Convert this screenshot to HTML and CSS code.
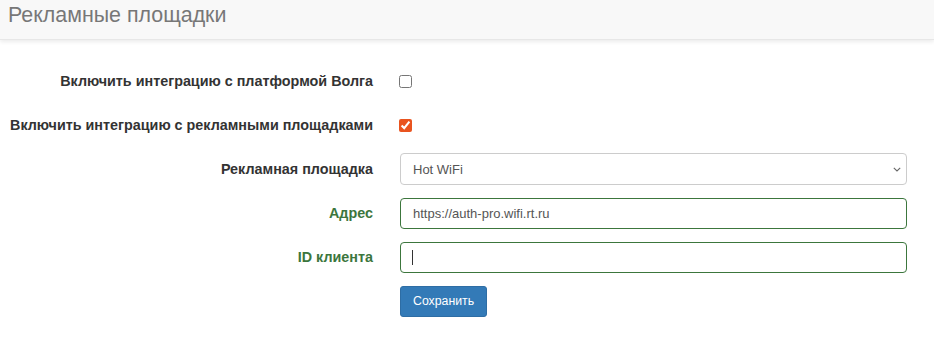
FILE: index.html
```html
<!DOCTYPE html>
<html lang="ru">
<head>
  <meta charset="UTF-8">
  <title>Рекламные площадки</title>
  <link rel="stylesheet" href="styles.css">
</head>
<body>
  <!-- Заголовок страницы -->
  <header class="page-header">
    <h1>Рекламные площадки</h1>
  </header>

  <form class="ads-form">
    <div class="form-row">
      <label class="form-label" for="volga">Включить интеграцию с платформой Волга</label>
      <div class="form-field">
        <input type="checkbox" id="volga">
      </div>
    </div>

    <div class="form-row">
      <label class="form-label" for="ads">Включить интеграцию с рекламными площадками</label>
      <div class="form-field">
        <input type="checkbox" id="ads" checked>
      </div>
    </div>

    <div class="form-row">
      <label class="form-label" for="platform">Рекламная площадка</label>
      <div class="form-field">
        <select id="platform" class="form-control">
          <option>Hot WiFi</option>
        </select>
        <svg class="select-arrow" width="8" height="5" viewBox="0 0 8 5">
          <path d="M0.8 0.8l3.2 3.2 3.2-3.2" fill="none" stroke="#666" stroke-width="1.1"/>
        </svg>
      </div>
    </div>

    <div class="form-row has-success">
      <label class="form-label" for="address">Адрес</label>
      <div class="form-field">
        <input type="text" id="address" class="form-control" value="https://auth-pro.wifi.rt.ru">
      </div>
    </div>

    <div class="form-row has-success">
      <label class="form-label" for="client">ID клиента</label>
      <div class="form-field">
        <input type="text" id="client" class="form-control" autofocus>
        <span class="caret"></span>
      </div>
    </div>

    <div class="form-row">
      <div></div>
      <div class="form-field">
        <button type="submit" class="btn-save">Сохранить</button>
      </div>
    </div>
  </form>
</body>
</html>
```

FILE: styles.css
```css
* {
  margin: 0;
  padding: 0;
  box-sizing: border-box;
}

body {
  font-family: 'Liberation Sans', Arial, sans-serif;
  font-size: 14px;
  color: #333;
  background: #fff;
}

.page-header {
  height: 40px;
  background: #f8f8f8;
  border-bottom: 1px solid #e7e7e7;
  box-shadow: 0 2px 4px rgba(0, 0, 0, 0.08);
  padding: 0 8px;
  display: flex;
  align-items: center;
}

.page-header h1 {
  font-size: 21.4px;
  font-weight: 400;
  color: #777;
  margin-top: -8px;
}

.ads-form {
  padding: 19px 27px 0 0;
}

.form-row {
  display: grid;
  grid-template-columns: 374px 1fr;
  column-gap: 26px;
  align-items: center;
  height: 44px;
}

.form-label {
  text-align: right;
  font-size: 14.35px;
  font-weight: 700;
  color: #333;
  padding-right: 1px;
}

.form-field {
  display: flex;
  align-items: center;
  position: relative;
}

.form-field input[type="checkbox"] {
  width: 13px;
  height: 13px;
  margin: 0 0 0 -1px;
  accent-color: #e9541f;
}

.form-control {
  width: 100%;
  height: 31px;
  padding: 0 12px;
  border: 1px solid #ccc;
  border-radius: 4px;
  font-family: inherit;
  font-size: 13px;
  color: #555;
  background: #fff;
}

select.form-control {
  appearance: none;
  height: 32px;
}

.select-arrow {
  position: absolute;
  right: 6px;
  top: 14px;
  pointer-events: none;
}

.form-control:focus {
  outline: none;
}

.caret {
  position: absolute;
  left: 12px;
  top: 8px;
  width: 1px;
  height: 15px;
  background: #333;
}

.has-success .form-label {
  color: #3c763d;
}

.has-success .form-control {
  border-color: #3c763d;
}

.btn-save {
  height: 31px;
  padding: 0 12px;
  border: 1px solid #2e6da4;
  border-radius: 3px;
  background: #337ab7;
  color: #fff;
  font-family: inherit;
  font-size: 12.3px;
  cursor: pointer;
}

.btn-save:hover {
  background: #286090;
}
```
